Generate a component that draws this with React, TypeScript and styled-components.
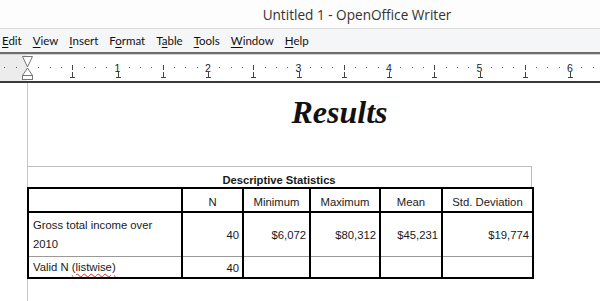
import React from 'react';
import styled, { createGlobalStyle } from 'styled-components';

const GlobalStyle = createGlobalStyle`
    html, body {
        margin: 0;
        padding: 0;
        height: 301px;
        overflow: hidden;
        background: #ffffff;
    }
    #root {
        height: 100%;
    }
`;

const Window = styled.div`
    display: flex;
    flex-direction: column;
    width: 600px;
    height: 301px;
    overflow: hidden;
`;

const TitleBar = styled.div`
    height: 28px;
    flex: none;
    display: flex;
    align-items: center;
    justify-content: center;
    padding-left: 114px;
    background: #fdfdfd;
    border-bottom: 1px solid #dcdcdc;
    font-family: 'Open Sans', 'Noto Sans', sans-serif;
    font-size: 13.6px;
    color: #333;
`;

const MenuBar = styled.div`
    height: 23px;
    flex: none;
    display: flex;
    align-items: center;
    gap: 11px;
    padding-left: 2px;
    background: #f5f6f7;
    border-bottom: 2px solid #6e6e6e;
    font-family: 'Lato', 'Open Sans', sans-serif;
    font-size: 11.5px;
    color: #111;

    u {
        text-decoration-thickness: 1px;
        text-underline-offset: 2px;
    }
`;

const MenuItem = styled.span`
    white-space: nowrap;
`;

const RulerBar = styled.div`
    height: 28px;
    flex: none;
    background: #fff;
    border-top: 1px solid #d4d4d4;
`;

const Page = styled.div`
    flex: 1;
    background: #fff;
    padding-left: 27px;
    overflow: hidden;
`;

const TextArea = styled.div`
    width: 624px;
    height: 100%;
    border-left: 1px solid #c8c8c8;
    padding-top: 9px;
    box-sizing: border-box;
`;

const Heading = styled.h1`
    margin: 0;
    font-family: 'Liberation Serif', 'Times New Roman', serif;
    font-style: italic;
    font-weight: bold;
    font-size: 32px;
    line-height: 40px;
    text-align: center;
    color: #111;
`;

const TableBlock = styled.div`
    width: 505px;
    margin-top: 34px;
    margin-left: -1px;
    font-family: 'Liberation Sans', Arial, sans-serif;
    color: #1a1a1a;
`;

const Caption = styled.div`
    height: 21px;
    box-sizing: border-box;
    border-top: 1px solid #bdbdbd;
    border-right: 1px solid #bdbdbd;
    padding-top: 7px;
    text-align: center;
    font-weight: bold;
    font-size: 11.2px;
    line-height: 13px;
`;

const Table = styled.table`
    width: 505px;
    border-collapse: collapse;
    border: 2px solid #000;
    table-layout: fixed;
    font-size: 11.3px;
`;

const HeadCell = styled.th`
    box-sizing: border-box;
    height: 24px;
    padding: 4px 2px 0;
    font-weight: normal;
    text-align: center;
    line-height: 14px;
    border-left: 2px solid #000;
    border-bottom: 2px solid #000;
`;

const Row = styled.tr<{ $h: number }>`
    height: ${p => p.$h}px;
`;

const Cell = styled.td<{ $label?: boolean; $last?: boolean }>`
    box-sizing: border-box;
    padding: ${p => (p.$label ? '1px 26px 0 4px' : '3px 3px 0 2px')};
    text-align: ${p => (p.$label ? 'left' : 'right')};
    vertical-align: middle;
    line-height: ${p => (p.$last ? '17px' : '19px')};
    border-left: 2px solid #000;
    border-bottom: ${p => (p.$last ? 'none' : '1px solid #9a9a9a')};
`;

const Squiggle = styled.span`
    text-decoration: underline wavy #d03030;
    text-decoration-thickness: 1px;
    text-underline-offset: 2px;
`;

const INCH = 90.5;
const ORIGIN = 27;

const Ruler: React.FC = () => {
    const dots: number[] = [];
    const halves: number[] = [];
    const tabs: number[] = [];
    for (let i = -2; i < 6 * 8 + 4; i++) {
        const x = ORIGIN + (i * INCH) / 8;
        if (i % 4 !== 0) dots.push(x);
        else if (i % 8 !== 0 && i > 0) halves.push(x);
    }
    for (let x = ORIGIN + INCH / 2; x < 600; x += INCH / 2) tabs.push(x);
    return (
        <svg width="600" height="28" viewBox="0 0 600 28">
            <rect x="0" y="0" width={ORIGIN} height="26" fill="#ececec" />
            {dots.map(x => (
                <rect key={'d' + x} x={Math.round(x)} y="12" width="1" height="1" fill="#555" />
            ))}
            {halves.map(x => (
                <rect key={'h' + x} x={Math.round(x)} y="10" width="1" height="5" fill="#444" />
            ))}
            {tabs.map(x => (
                <g key={'t' + x} stroke="#444" strokeWidth="1" fill="none">
                    <line x1={Math.round(x) + 0.5} y1="17" x2={Math.round(x) + 0.5} y2="22" />
                    <line x1={Math.round(x) - 2} y1="22.5" x2={Math.round(x) + 3} y2="22.5" />
                </g>
            ))}
            {[1, 2, 3, 4, 5, 6].map(n => (
                <text
                    key={n}
                    x={ORIGIN + n * INCH}
                    y="17"
                    textAnchor="middle"
                    fontFamily="'Liberation Sans', Arial, sans-serif"
                    fontSize="10.5"
                    fill="#222"
                >
                    {n}
                </text>
            ))}
            <g stroke="#777" strokeWidth="1" fill="#fff">
                <polygon points="22.5,1.5 32.5,1.5 27.5,12" />
                <polygon points="27.5,13 22.5,20.5 32.5,20.5" />
                <rect x="22.5" y="20.5" width="10" height="4" />
            </g>
            <rect x="0" y="26" width="600" height="2" fill="#3a3a3a" />
        </svg>
    );
};

const menus: [string, string, string][] = [
    ['', 'E', 'dit'],
    ['', 'V', 'iew'],
    ['', 'I', 'nsert'],
    ['F', 'o', 'rmat'],
    ['T', 'a', 'ble'],
    ['', 'T', 'ools'],
    ['', 'W', 'indow'],
    ['', 'H', 'elp'],
];

const headers = ['', 'N', 'Minimum', 'Maximum', 'Mean', 'Std. Deviation'];
const widths = [154, 61, 67, 70, 62, 91];

export default function App() {
    return (
        <>
            <GlobalStyle />
            <Window>
                <TitleBar>Untitled 1 - OpenOffice Writer</TitleBar>
                <MenuBar>
                    {menus.map(([pre, key, rest]) => (
                        <MenuItem key={pre + key + rest}>
                            {pre}
                            <u>{key}</u>
                            {rest}
                        </MenuItem>
                    ))}
                </MenuBar>
                <RulerBar>
                    <Ruler />
                </RulerBar>
                <Page>
                    <TextArea>
                        <Heading>Results</Heading>
                        <TableBlock>
                            <Caption>Descriptive Statistics</Caption>
                            <Table>
                                <colgroup>
                                    {widths.map((w, i) => (
                                        <col key={i} style={{ width: w }} />
                                    ))}
                                </colgroup>
                                <thead>
                                    <tr>
                                        {headers.map((h, i) => (
                                            <HeadCell key={i}>{h}</HeadCell>
                                        ))}
                                    </tr>
                                </thead>
                                <tbody>
                                    <Row $h={44}>
                                        <Cell $label>Gross total income over 2010</Cell>
                                        <Cell>40</Cell>
                                        <Cell>$6,072</Cell>
                                        <Cell>$80,312</Cell>
                                        <Cell>$45,231</Cell>
                                        <Cell>$19,774</Cell>
                                    </Row>
                                    <Row $h={21}>
                                        <Cell $label $last>
                                            Valid N <Squiggle>(listwise)</Squiggle>
                                        </Cell>
                                        <Cell $last>40</Cell>
                                        <Cell $last />
                                        <Cell $last />
                                        <Cell $last />
                                        <Cell $last />
                                    </Row>
                                </tbody>
                            </Table>
                        </TableBlock>
                    </TextArea>
                </Page>
            </Window>
        </>
    );
}
